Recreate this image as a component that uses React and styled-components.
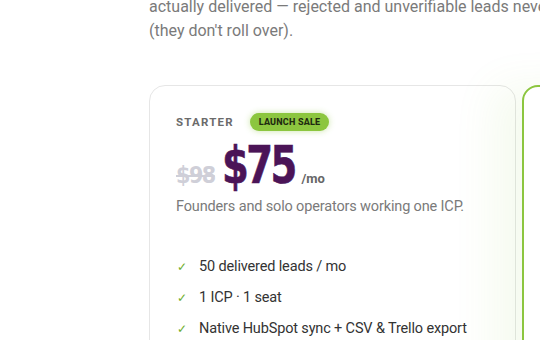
import styled, { createGlobalStyle } from 'styled-components'

const Global = createGlobalStyle`
  html, body { margin: 0; padding: 0; background: #fff; }
  body { font-family: Roboto, "Noto Sans", sans-serif; overflow: hidden; }
`

const Page = styled.div`
  padding-left: 149px;
  width: 540px;
  height: 340px;
  overflow: hidden;
  box-sizing: border-box;
`

const Lead = styled.p`
  margin: -5px 0 0;
  font-size: 16px;
  line-height: 24px;
  color: #7a7a7a;
  white-space: nowrap;
`

const Plans = styled.div`
  margin-top: 42px;
  display: grid;
  grid-template-columns: 367px 367px;
  gap: 6px;
`

const Card = styled.div`
  border: 1px solid ${(p) => (p.featured ? '#8cc63f' : '#e6e6e6')};
  border-width: ${(p) => (p.featured ? '2px' : '1px')};
  border-radius: 16px;
  padding: 26px 26px 0;
  height: 300px;
  background: #fff;
  box-shadow: ${(p) => (p.featured ? '-30px 0 40px rgba(140,198,63,0.08)' : 'none')};
`

const Head = styled.div`
  display: flex;
  align-items: center;
  gap: 16px;
  height: 20px;
`

const Tier = styled.span`
  font-size: 11.5px;
  font-weight: 700;
  letter-spacing: 1.2px;
  color: #6b6b6b;
`

const Badge = styled.span`
  background: #8cc63f;
  color: #1f2a10;
  font-size: 9px;
  font-weight: 800;
  letter-spacing: 0.2px;
  border-radius: 10px;
  padding: 4px 9px;
  box-shadow: 0 0 6px rgba(140,198,63,0.45);
`

const PriceRow = styled.div`
  display: flex;
  align-items: baseline;
  margin-top: 4px;
  height: 58px;
`

const Old = styled.span`
  font-family: "DejaVu Sans Condensed", "DejaVu Sans", sans-serif;
  font-weight: 700;
  font-size: 23px;
  color: #cfcfd8;
  text-decoration: line-through;
  letter-spacing: -1.5px;
  margin-right: 7px;
`

const Price = styled.span`
  display: inline-block;
  font-family: "DejaVu Sans Condensed", "DejaVu Sans", sans-serif;
  font-weight: 700;
  font-size: 51px;
  letter-spacing: -3px;
  color: #4b1457;
  transform: scaleX(0.84);
  transform-origin: left bottom;
  margin-right: -7px;
  -webkit-text-stroke: 0.6px #4b1457;
`

const Per = styled.span`
  font-size: 13px;
  font-weight: 700;
  color: #666;
`

const Desc = styled.p`
  margin: 3px 0 0;
  font-size: 14.5px;
  letter-spacing: -0.15px;
  line-height: 20px;
  color: #7a7a7a;
`

const Features = styled.ul`
  list-style: none;
  margin: 40px 0 0;
  padding: 0;
  display: flex;
  flex-direction: column;
  gap: 11px;
`

const Feature = styled.li`
  display: flex;
  align-items: center;
  gap: 13px;
  font-size: 14.5px;
  letter-spacing: -0.15px;
  line-height: 20px;
  color: #333;
`

const Check = styled.span`
  color: #6fae2e;
  font-size: 12px;
  width: 9px;
  padding-left: 1px;
`

const features = [
  '50 delivered leads / mo',
  '1 ICP · 1 seat',
  'Native HubSpot sync + CSV & Trello export',
]

export default function App() {
  return (
    <Page>
      <Global />
      <Lead>
        actually delivered — rejected and unverifiable leads never count
        <br />
        (they don't roll over).
      </Lead>
      <Plans>
        <Card>
          <Head>
            <Tier>STARTER</Tier>
            <Badge>LAUNCH SALE</Badge>
          </Head>
          <PriceRow>
            <Old>$98</Old>
            <Price>$75</Price>
            <Per>/mo</Per>
          </PriceRow>
          <Desc>Founders and solo operators working one ICP.</Desc>
          <Features>
            {features.map((f) => (
              <Feature key={f}>
                <Check>✓</Check>
                {f}
              </Feature>
            ))}
          </Features>
        </Card>
        <Card featured />
      </Plans>
    </Page>
  )
}
